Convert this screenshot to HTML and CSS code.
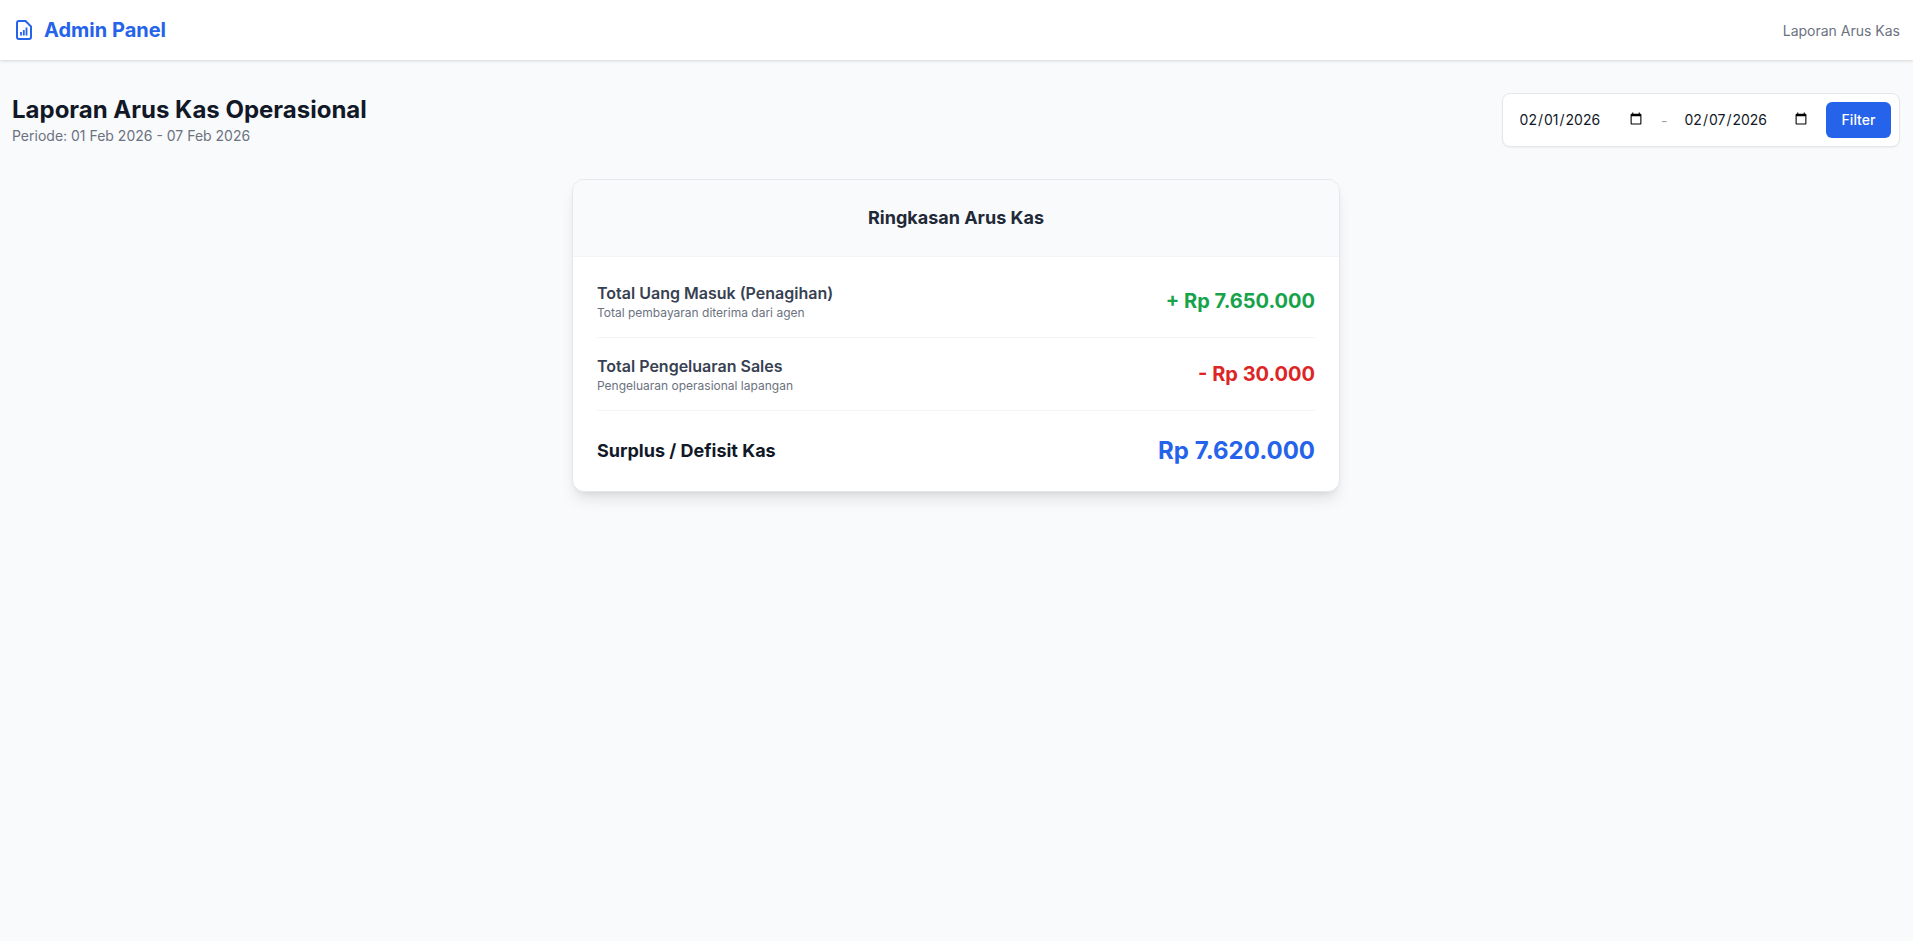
FILE: index.html
```html
<!DOCTYPE html>
<html lang="en">
<head>
    <meta charset="UTF-8">
    <meta name="viewport" content="width=device-width, initial-scale=1.0">
    <title>Laporan Arus Kas</title>
    <link rel="stylesheet" href="styles.css">
</head>
<body>

    <nav class="navbar">
        <a class="brand" href="#">
            <svg class="brand-icon" viewBox="0 0 18 22" fill="none" stroke="currentColor" stroke-width="2" stroke-linejoin="round">
                <path d="M4 2h6.500l5.500 5.500V18a2 2 0 0 1-2 2H4a2 2 0 0 1-2-2V4a2 2 0 0 1 2-2z"/>
                <path stroke-width="1.800" d="M6 16.500V13M8.800 16.500V11M11.500 16.500V8.500"/>
            </svg>
            <span>Admin Panel</span>
        </a>
        <span class="nav-title">Laporan Arus Kas</span>
    </nav>

    <main class="content">
        <div class="page-head">
            <div>
                <h1>Laporan Arus Kas Operasional</h1>
                <p class="period">Periode: 01 Feb 2026 - 07 Feb 2026</p>
            </div>
            <form class="filter">
                <input type="date" value="2026-02-01">
                <span class="dash">-</span>
                <input type="date" value="2026-02-07">
                <button type="button">Filter</button>
            </form>
        </div>

        <section class="card">
            <h2 class="card-head">Ringkasan Arus Kas</h2>
            <div class="card-body">
                <div class="row">
                    <div>
                        <div class="row-label">Total Uang Masuk (Penagihan)</div>
                        <div class="row-note">Total pembayaran diterima dari agen</div>
                    </div>
                    <div class="amount green">+ Rp 7.650.000</div>
                </div>
                <div class="row">
                    <div>
                        <div class="row-label">Total Pengeluaran Sales</div>
                        <div class="row-note">Pengeluaran operasional lapangan</div>
                    </div>
                    <div class="amount red">- Rp 30.000</div>
                </div>
                <div class="row total">
                    <div class="total-label">Surplus / Defisit Kas</div>
                    <div class="total-amount">Rp 7.620.000</div>
                </div>
            </div>
        </section>
    </main>

</body>
</html>
```

FILE: styles.css
```css
* {
    box-sizing: border-box;
}
body {
    margin: 0;
    min-height: 941px;
    font-family: Inter, sans-serif;
    background-color: #f9fafb;
    color: #111827;
}
.navbar {
    display: flex;
    justify-content: space-between;
    align-items: center;
    height: 60px;
    padding: 0 13px 0 15px;
    background-color: white;
    box-shadow: 0 1px 3px rgba(0, 0, 0, 0.15);
}
.brand {
    display: flex;
    align-items: center;
    gap: 11px;
    color: #2563eb;
    font-size: 20px;
    font-weight: 700;
    text-decoration: none;
}
.brand-icon {
    width: 18px;
    height: 22px;
}
.nav-title {
    font-size: 14px;
    color: #6b7280;
}
.content {
    padding: 33px 13px 0 12px;
}
.page-head {
    display: flex;
    justify-content: space-between;
    align-items: flex-start;
}
h1 {
    margin: 0;
    padding-top: 1px;
    font-size: 24px;
    line-height: 32px;
    font-weight: 700;
}
.period {
    margin: 0;
    font-size: 14px;
    line-height: 20px;
    color: #6b7280;
}
.filter {
    display: flex;
    align-items: center;
    gap: 8px;
    padding: 8px;
    background-color: white;
    border: 1px solid #e5e7eb;
    border-radius: 8px;
    box-shadow: 0 1px 2px rgba(0, 0, 0, 0.05);
}
input[type="date"] {
    width: 142.5px;
    padding: 5px 8px 7px;
    border: none;
    outline: none;
    background: transparent;
    font-family: Inter, sans-serif;
    font-size: 14px;
    color: #111827;
}
.dash {
    color: #9ca3af;
    font-size: 14px;
}
button {
    width: 65px;
    height: 36px;
    padding: 0 0 2px;
    border: none;
    border-radius: 6px;
    background-color: #2563eb;
    color: white;
    font-family: Inter, sans-serif;
    font-size: 14px;
    font-weight: 500;
}
.card {
    width: 768px;
    margin: 32px auto 0;
    background-color: white;
    border: 1px solid #e5e7eb;
    border-radius: 12px;
    box-shadow: 0 10px 15px -3px rgba(0, 0, 0, 0.1), 0 4px 6px -4px rgba(0, 0, 0, 0.1);
    overflow: hidden;
}
.card-head {
    margin: 0;
    padding: 24px;
    font-size: 18px;
    line-height: 28px;
    font-weight: 700;
    text-align: center;
    color: #1f2937;
    background-color: #f9fafb;
    border-bottom: 1px solid #f3f4f6;
}
.card-body {
    padding: 8px 24px 0;
}
.row {
    display: flex;
    justify-content: space-between;
    align-items: center;
    height: 73px;
    border-bottom: 1px solid #f3f4f6;
}
.row-label {
    font-size: 16px;
    line-height: 24px;
    font-weight: 600;
    color: #374151;
}
.row-note {
    font-size: 12px;
    line-height: 16px;
    color: #6b7280;
}
.amount {
    font-size: 20px;
    font-weight: 700;
}
.green {
    color: #16a34a;
}
.red {
    color: #dc2626;
}
.total {
    height: 80px;
    padding-bottom: 2px;
    border-bottom: none;
}
.total-label {
    font-size: 18px;
    font-weight: 700;
    color: #111827;
}
.total-amount {
    font-size: 24px;
    font-weight: 700;
    color: #2563eb;
}
```
